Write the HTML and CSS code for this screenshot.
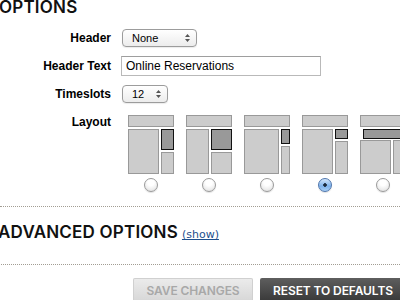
FILE: index.html
```html
<!DOCTYPE html>
<html>
<head>
    <meta charset="UTF-8">
    <meta name="viewport" content="width=device-width, initial-scale=1.0">
    <title>Display Options</title>
    <link rel="stylesheet" href="styles.css">
</head>
<body>
    <div class="page">
        <h2 class="section-title">OPTIONS</h2>

        <div class="form">
            <div class="field">
                <label class="field-label">Header</label>
                <div class="select select-wide">
                    <span class="select-value">None</span>
                    <svg class="select-arrows" width="5" height="8" viewBox="0 0 5 8"><path d="M2.5 0 L5 3 H0 Z M0 5 H5 L2.5 8 Z" fill="#555"/></svg>
                </div>
            </div>
            <div class="field">
                <label class="field-label">Header Text</label>
                <input class="text-input" type="text" value="Online Reservations">
            </div>
            <div class="field">
                <label class="field-label">Timeslots</label>
                <div class="select select-small">
                    <span class="select-value">12</span>
                    <svg class="select-arrows" width="5" height="8" viewBox="0 0 5 8"><path d="M2.5 0 L5 3 H0 Z M0 5 H5 L2.5 8 Z" fill="#555"/></svg>
                </div>
            </div>
            <div class="field field-top">
                <label class="field-label">Layout</label>
                <div class="layouts">
                    <div class="layout-option">
                        <div class="thumb">
                            <div class="thumb-top"></div>
                            <div class="thumb-body">
                                <div class="pane" style="width: 31px"></div>
                                <div class="thumb-col">
                                    <div class="pane pane-dark" style="height: 21px"></div>
                                    <div class="pane"></div>
                                </div>
                            </div>
                        </div>
                        <input class="radio" type="radio" name="layout">
                    </div>
                    <div class="layout-option">
                        <div class="thumb">
                            <div class="thumb-top"></div>
                            <div class="thumb-body">
                                <div class="pane" style="width: 23px"></div>
                                <div class="thumb-col">
                                    <div class="pane pane-dark" style="height: 21px"></div>
                                    <div class="pane"></div>
                                </div>
                            </div>
                        </div>
                        <input class="radio" type="radio" name="layout">
                    </div>
                    <div class="layout-option">
                        <div class="thumb">
                            <div class="thumb-top"></div>
                            <div class="thumb-body">
                                <div class="pane" style="width: 35px"></div>
                                <div class="thumb-col">
                                    <div class="pane pane-dark" style="height: 15px"></div>
                                    <div class="pane"></div>
                                </div>
                            </div>
                        </div>
                        <input class="radio" type="radio" name="layout">
                    </div>
                    <div class="layout-option">
                        <div class="thumb">
                            <div class="thumb-top"></div>
                            <div class="thumb-body">
                                <div class="pane" style="width: 31px"></div>
                                <div class="thumb-col">
                                    <div class="pane pane-dark" style="height: 10px"></div>
                                    <div class="pane"></div>
                                </div>
                            </div>
                        </div>
                        <input class="radio" type="radio" name="layout" checked>
                    </div>
                    <div class="layout-option">
                        <div class="thumb">
                            <div class="thumb-top"></div>
                            <div class="pane pane-dark pane-bar"></div>
                            <div class="thumb-body thumb-body-short">
                                <div class="pane" style="width: 31px"></div>
                                <div class="pane"></div>
                            </div>
                        </div>
                        <input class="radio" type="radio" name="layout">
                    </div>
                </div>
            </div>
        </div>

        <div class="advanced">
            <h2 class="section-title">ADVANCED OPTIONS</h2>
            <a class="toggle-link" href="#">(show)</a>
        </div>

        <div class="actions">
            <button class="btn btn-disabled">SAVE CHANGES</button>
            <button class="btn btn-dark">RESET TO DEFAULTS</button>
        </div>
    </div>
</body>
</html>
```

FILE: styles.css
```css
* {
    box-sizing: border-box;
}
body {
    margin: 0;
    background: #fff;
    overflow: hidden;
    font-family: "Liberation Sans", Arial, sans-serif;
    color: #000;
}
.page {
    width: 400px;
}
.section-title {
    margin: 0;
    font-family: Inter, "Liberation Sans", sans-serif;
    font-weight: 600;
    font-size: 17px;
    line-height: 17px;
    letter-spacing: 0.2px;
    color: #111;
}
.page > .section-title {
    height: 23px;
    margin-left: -1px;
    margin-top: -2px;
    line-height: 18px;
}
.form {
    display: flex;
    flex-direction: column;
    border-bottom: 1px dotted #a29d93;
    padding-bottom: 14px;
    margin-top: 3px;
}
.field {
    display: flex;
    align-items: center;
    min-height: 28px;
}
.field-top {
    align-items: flex-start;
}
.field-label {
    flex: none;
    width: 111px;
    margin-right: 11px;
    text-align: right;
    font-weight: bold;
    font-size: 12px;
    line-height: 28px;
}
.select {
    flex: none;
    display: flex;
    align-items: center;
    justify-content: space-between;
    height: 18px;
    padding: 0 6px 0 9px;
    border: 1px solid #9c9c9c;
    border-radius: 4px;
    background: linear-gradient(#ffffff, #ececec);
    box-shadow: 0 1px 1px rgba(0,0,0,0.08);
    font-size: 11px;
}
.select-wide {
    width: 75px;
}
.select-small {
    width: 46px;
}
.select-value {
    line-height: 16px;
}
.text-input {
    flex: none;
    width: 200px;
    height: 20px;
    margin: 0 0 0 -1px;
    padding: 0 4px;
    border: 1px solid #b9b9b9;
    border-top-color: #9e9e9e;
    font-family: "Liberation Sans", Arial, sans-serif;
    font-size: 12px;
    color: #000;
}
.layouts {
    flex: none;
    display: flex;
    margin-top: 7px;
}
.layout-option {
    flex: none;
    width: 58px;
    display: flex;
    flex-direction: column;
    align-items: center;
}
.thumb {
    width: 46px;
    display: flex;
    flex-direction: column;
    gap: 2px;
}
.thumb-top {
    height: 12px;
    background: #cccccc;
    border: 1px solid #999;
}
.thumb-body {
    height: 45px;
    display: flex;
    gap: 2px;
}
.thumb-body-short {
    height: 34px;
}
.thumb-col {
    flex: 1;
    display: flex;
    flex-direction: column;
    gap: 2px;
}
.pane {
    flex: 1;
    background: #cccccc;
    border: 1px solid #999;
}
.thumb-body > .pane[style] {
    flex: none;
}
.thumb-col .pane-dark {
    flex: none;
}
.pane-dark {
    background: #999999;
    border-color: #111;
}
.pane-bar {
    flex: none;
    height: 10px;
    margin: 0 -3px -1px 3px;
}
.radio {
    appearance: none;
    width: 14px;
    height: 14px;
    margin: 4px 0 0;
    border: 1px solid #9a9a9a;
    border-radius: 50%;
    background: radial-gradient(circle at 50% 30%, #ffffff 30%, #dcdcdc 100%);
    box-shadow: 0 1px 1px rgba(0,0,0,0.12);
}
.radio:checked {
    border-color: #4f76ac;
    background: radial-gradient(circle, #1b2a3d 0 1.5px, transparent 2px),
        linear-gradient(#d3e6fb, #7eb2ec 60%, #a9d0f7);
}
.advanced {
    display: flex;
    align-items: baseline;
    gap: 4px;
    height: 58px;
    padding-top: 17px;
    border-bottom: 1px dotted #a29d93;
    margin-left: -2px;
}
.toggle-link {
    font-family: "DejaVu Sans", Verdana, sans-serif;
    font-size: 11px;
    color: #1d4f8d;
    text-decoration: underline;
}
.actions {
    display: flex;
    gap: 7px;
    padding: 13px 0 0 133px;
}
.btn {
    flex: none;
    height: 24px;
    padding: 0 13px;
    border: none;
    border-radius: 2px;
    font-family: Inter, "Liberation Sans", sans-serif;
    font-weight: 600;
    font-size: 12px;
    letter-spacing: -0.1px;
}
.btn-disabled {
    width: 120px;
    background: linear-gradient(#ececec, #d6d6d6);
    color: #a8a8a8;
    box-shadow: inset 0 0 0 1px #d0d0d0;
}
.btn-dark {
    width: 146px;
    background: linear-gradient(#5e5e5e, #383838);
    color: #fff;
}
```
